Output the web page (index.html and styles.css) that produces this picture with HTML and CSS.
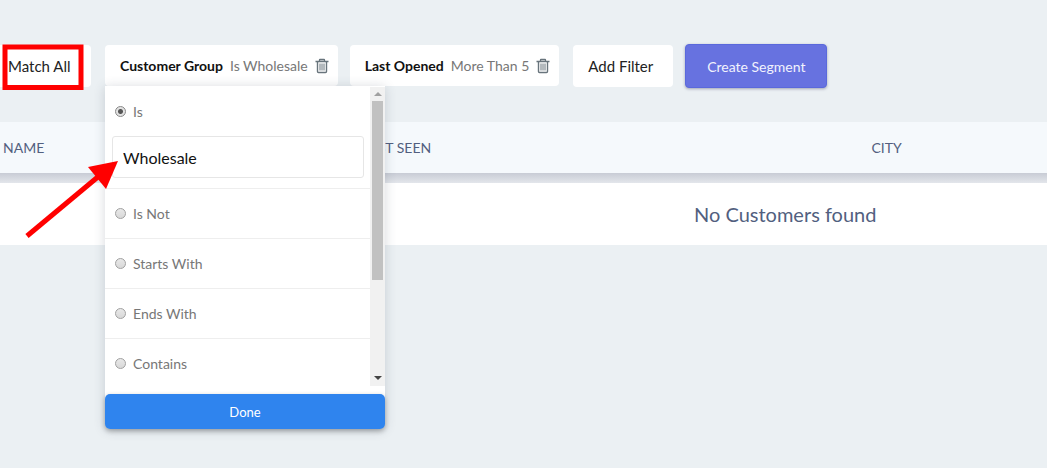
FILE: index.html
```html
<!DOCTYPE html>
<html lang="en">
<head>
<meta charset="utf-8">
<title>Customer segments</title>
<link rel="stylesheet" href="styles.css">
</head>
<body>
<svg class="sprite" aria-hidden="true">
  <symbol id="trash" viewBox="0 0 14 16">
    <path d="M.5 3.500h13M4.500 3V2q0-.5.5-.5h4q.5 0 .5.5v1" fill="none" stroke="currentColor" stroke-width="1.300"/>
    <path d="M2.500 4v9.500q0 1 1 1h7q1 0 1-1V4" fill="none" stroke="currentColor" stroke-width="1.400"/>
    <path d="M5 5.500v7M7 5.500v7M9 5.500v7" fill="none" stroke="currentColor"/>
  </symbol>
</svg>
<main class="page">
  <div class="toolbar">
    <button class="btn match" type="button">Match All</button>
    <div class="filter">
      <div class="chip">
        <strong class="chip-name">Customer Group</strong>
        <span class="chip-value">Is Wholesale</span>
        <button class="trash" type="button" aria-label="Remove Customer Group"><svg><use href="#trash"/></svg></button>
      </div>
      <form class="menu">
        <div class="menu-scroll">
          <div class="options">
            <div class="option">
              <label class="choice"><input type="radio" name="rule" checked>Is</label>
              <input class="value" type="text" value="Wholesale" aria-label="Customer group">
            </div>
            <div class="option"><label class="choice"><input type="radio" name="rule">Is Not</label></div>
            <div class="option"><label class="choice"><input type="radio" name="rule">Starts With</label></div>
            <div class="option"><label class="choice"><input type="radio" name="rule">Ends With</label></div>
            <div class="option"><label class="choice"><input type="radio" name="rule">Contains</label></div>
          </div>
          <div class="scrollbar" aria-hidden="true">
            <svg class="scroll-arrow up" viewBox="0 0 15 14"><path d="M4 9h8L8 5z"/></svg>
            <div class="track"><div class="thumb"></div></div>
            <svg class="scroll-arrow down" viewBox="0 0 15 14"><path d="M4 4h8L8 8z"/></svg>
          </div>
        </div>
        <button class="done" type="button">Done</button>
      </form>
    </div>
    <div class="filter">
      <div class="chip">
        <strong class="chip-name">Last Opened</strong>
        <span class="chip-value">More Than 5</span>
        <button class="trash" type="button" aria-label="Remove Last Opened"><svg><use href="#trash"/></svg></button>
      </div>
    </div>
    <button class="btn add" type="button">Add Filter</button>
    <button class="create" type="button">Create Segment</button>
  </div>
  <table class="customers">
    <thead>
      <tr><th class="col-name">NAME</th><th class="col-seen">LAST SEEN</th><th>CITY</th></tr>
    </thead>
    <tbody>
      <tr><td colspan="3">No Customers found</td></tr>
    </tbody>
  </table>
  <svg class="marks" width="130" height="245" viewBox="0 0 130 245" aria-hidden="true">
    <rect x="5" y="47" width="76" height="40.500" fill="none" stroke="#f00" stroke-width="5"/>
    <path d="M27 236L99 176" stroke="#f00" stroke-width="5"/>
    <path d="M118 161L88 167L106 189z" fill="#f00"/>
  </svg>
</main>
</body>
</html>
```
FILE: styles.css
```css
* { box-sizing: border-box; }
body {
  margin: 0;
  background: #ebf0f3;
  font-family: Lato, sans-serif;
  font-size: 14px;
  color: #777;
}
button, input { font: inherit; margin: 0; }
button { border: 0; cursor: pointer; }
.sprite { position: absolute; width: 0; height: 0; }
.page { position: relative; min-height: 100vh; overflow: hidden; }
.toolbar {
  display: flex;
  align-items: flex-start;
  gap: 14px;
  padding: 45px 0 35px;
  white-space: nowrap;
}
.btn {
  height: 42px;
  border-radius: 4px;
  background: #fff;
  color: #222;
  font-size: 15px;
}
.match { width: 91px; padding: 0 8px; text-align: left; border-radius: 0 4px 4px 0; }
.add { width: 100px; padding: 0 15px; text-align: left; }
.create {
  width: 142px;
  height: 44px;
  margin: -1px 0 -1px -2px;
  border: 1px solid #5a69dc;
  border-radius: 4px;
  background: #6772e0;
  color: #f2f3fd;
  box-shadow: 0 1px 3px rgba(50, 50, 93, .4);
}
.filter { position: relative; }
.filter + .filter { margin-left: -2px; }
.chip {
  display: flex;
  align-items: center;
  gap: 7px;
  height: 41px;
  padding: 0 8px 0 15px;
  border-radius: 4px;
  background: #fff;
}
.chip-name { color: #111; }
.trash {
  display: flex;
  padding: 0;
  width: 15px;
  background: none;
  color: #68747c;
}
.trash svg { width: 14px; height: 16px; }
.menu {
  position: absolute;
  z-index: 2;
  top: 41px;
  left: 0;
  width: 280px;
  padding-top: 1px;
  border-radius: 0 0 5px 5px;
  background: #fff;
  box-shadow: 0 1px 12px rgba(50, 60, 80, .2);
}
.menu-scroll { display: flex; height: 299px; overflow: hidden; }
.options { flex: 1; }
.option { padding-bottom: 10px; border-bottom: 1px solid #eee; }
.option + .option { padding-bottom: 0; }
.option:last-child { border: 0; }
.choice {
  display: flex;
  align-items: center;
  gap: 7px;
  height: 49px;
  padding-left: 10px;
}
.choice input {
  appearance: none;
  width: 11px;
  height: 11px;
  border: 1px solid #a0a0a0;
  border-radius: 50%;
  background: linear-gradient(#e8e8e8, #d8d8d8);
}
.choice input:checked { background: radial-gradient(circle, #555 0 2px, #e2e2e2 3px); border-color: #888; }
.value {
  display: block;
  width: calc(100% - 13px);
  height: 42px;
  margin-left: 7px;
  padding: 0 10px;
  border: 1px solid #e6e6e6;
  border-radius: 3px;
  background: #fff;
  color: #111;
  font-size: 16px;
}
.scrollbar { display: flex; flex-direction: column; width: 15px; background: #f1f1f1; }
.scroll-arrow { display: block; width: 15px; height: 14px; }
.up { fill: #a0a0a0; }
.down { fill: #444; }
.track { flex: 1; padding: 0 2px; }
.thumb { height: 66%; background: #c1c1c1; }
.done {
  display: block;
  width: 100%;
  height: 35px;
  margin-top: 8px;
  border-radius: 5px;
  background: #2f84ee;
  color: #fff;
  font-size: 13px;
  box-shadow: 0 2px 5px rgba(0, 0, 0, .3);
}
.customers { width: 150%; border-spacing: 0; table-layout: fixed; color: #525f7f; }
.customers th {
  height: 51px;
  padding: 0 3px;
  background: #f5f9fc;
  font-weight: 400;
  text-align: left;
}
.col-name { width: 22.8%; }
.col-seen { width: 32.5%; }
.customers td {
  height: 72px;
  padding: 10px 0 0;
  background: linear-gradient(#c8ccd5, #e3e6eb) top / 100% 10px no-repeat #fff;
  font-size: 20px;
  text-align: center;
}
.marks { position: absolute; z-index: 3; top: 0; left: 0; pointer-events: none; }
```
